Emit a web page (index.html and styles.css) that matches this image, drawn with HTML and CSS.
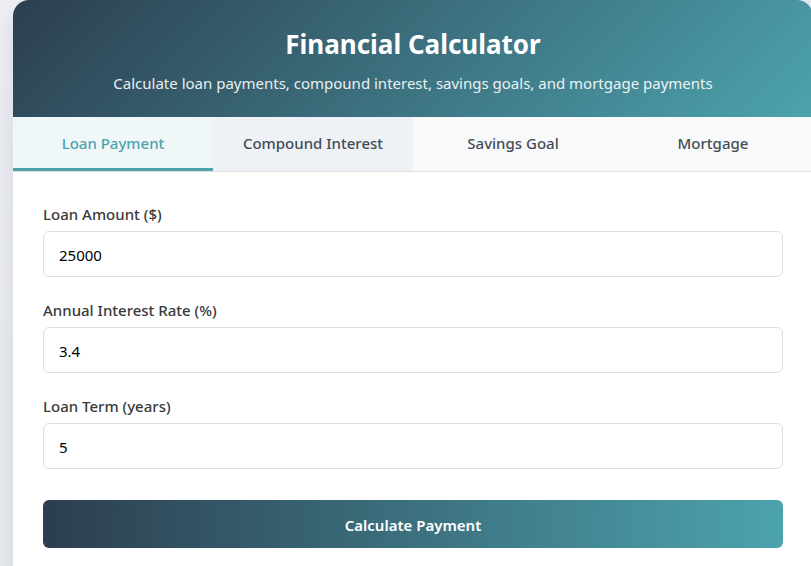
FILE: index.html
```html
<!DOCTYPE html>
<html>
<head>
<meta charset="utf-8">
<link rel="stylesheet" href="styles.css">
</head>
<body>
<div class="card">
  <header class="hero">
    <h1 class="title">Financial Calculator</h1>
    <p class="subtitle">Calculate loan payments, compound interest, savings goals, and mortgage payments</p>
  </header>
  <nav class="tabs">
    <div class="tab active">Loan Payment</div>
    <div class="tab hover">Compound Interest</div>
    <div class="tab">Savings Goal</div>
    <div class="tab">Mortgage</div>
  </nav>
  <form class="form">
    <div class="group">
      <label class="label">Loan Amount ($)</label>
      <input class="input" type="text" value="25000">
    </div>
    <div class="group">
      <label class="label">Annual Interest Rate (%)</label>
      <input class="input" type="text" value="3.4">
    </div>
    <div class="group">
      <label class="label">Loan Term (years)</label>
      <input class="input" type="text" value="5">
    </div>
    <button class="btn" type="button">Calculate Payment</button>
  </form>
</div>
</body>
</html>
```
FILE: styles.css
```css
html, body {
  margin: 0;
  padding: 0;
}
body {
  width: 811px;
  height: 566px;
  overflow: hidden;
  background: linear-gradient(135deg, #eef0f5 0%, #dfe3ea 100%);
  font-family: "Noto Sans", "Open Sans", sans-serif;
}
.card {
  margin-left: 13px;
  width: 800px;
  background: #fff;
  border-radius: 16px 16px 0 0;
  overflow: hidden;
  box-shadow: 0 10px 30px rgba(0, 0, 0, 0.1);
  min-height: 566px;
}
.hero {
  height: 117px;
  box-sizing: border-box;
  padding-top: 28px;
  text-align: center;
  color: #fff;
  background: linear-gradient(135deg, #2c3e50 0%, #4ca3ad 100%);
}
.title {
  margin: 0;
  font-size: 26px;
  font-weight: 700;
  line-height: 32px;
}
.subtitle {
  margin: 13px 0 0;
  font-size: 15px;
  line-height: 20px;
  opacity: 0.9;
}
.tabs {
  display: flex;
  background: #f8f9fa;
  border-bottom: 1px solid #e0e0e0;
}
.tab {
  flex: 1;
  height: 54px;
  box-sizing: border-box;
  display: flex;
  align-items: center;
  justify-content: center;
  font-size: 15px;
  font-weight: 500;
  color: #444c56;
  border-bottom: 3px solid transparent;
  padding-top: 1px;
}
.tab.active {
  background: #eff7f9;
  color: #4ca3ad;
  border-bottom-color: #4ca3ad;
}
.tab.hover {
  background: #eef1f5;
}
.form {
  padding: 32px 30px 0;
}
.group {
  margin-bottom: 23px;
}
.label {
  display: block;
  font-size: 15px;
  font-weight: 500;
  color: #3a3a3a;
  line-height: 20px;
  margin-bottom: 7px;
}
.input {
  display: block;
  box-sizing: border-box;
  width: 100%;
  height: 46px;
  padding: 1px 15px 0;
  border: 1px solid #dddddd;
  border-radius: 6px;
  font-family: "Noto Sans", sans-serif;
  font-size: 15px;
  color: #000;
  background: #fff;
  outline: none;
}
.btn {
  display: block;
  width: 100%;
  height: 48px;
  margin-top: 31px;
  padding-top: 2px;
  border: none;
  border-radius: 6px;
  color: #fff;
  font-family: "Noto Sans", sans-serif;
  font-size: 15px;
  font-weight: 600;
  background: linear-gradient(90deg, #2c3e50 0%, #4ca3ad 100%);
}
```
